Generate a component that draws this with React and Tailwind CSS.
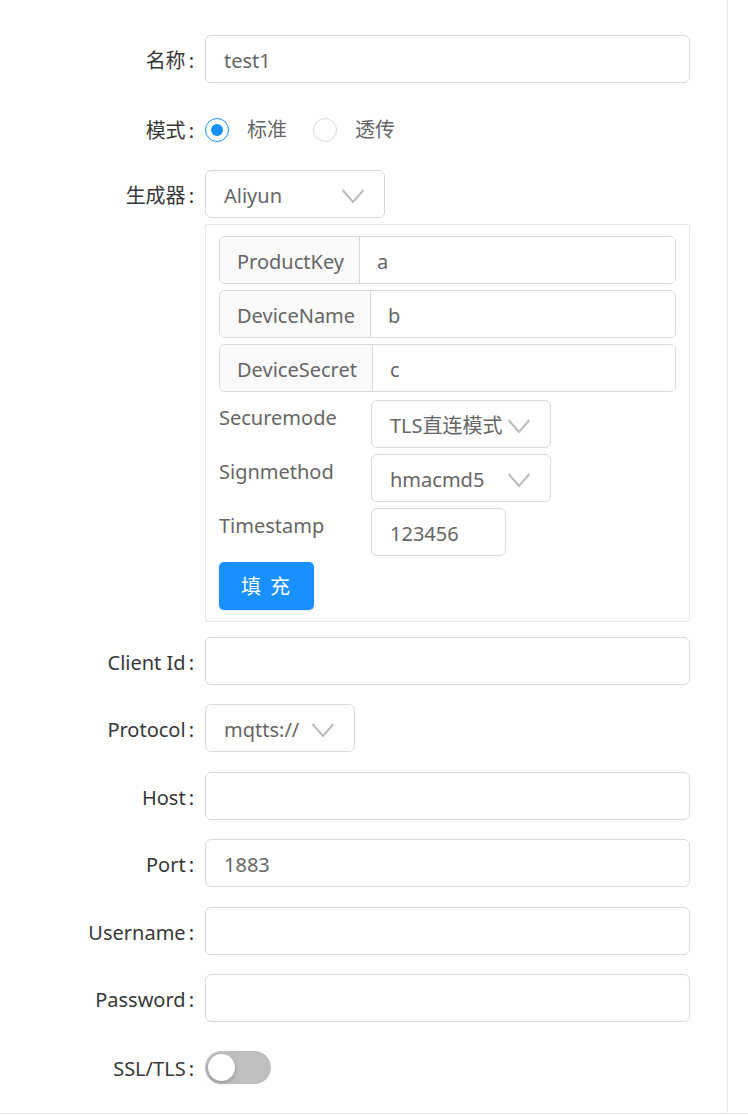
import React from "react";

const font = { fontFamily: '"Noto Sans", "Noto Sans CJK SC", sans-serif' };

function Chevron() {
    return (
        <svg width="24" height="16" viewBox="0 0 24 16" className="absolute right-[19px] top-[17px]" fill="none">
            <path d="M1.5 2 L12 14 L22.5 2" stroke="#bcbcbc" strokeWidth="2" />
        </svg>
    );
}

function Row({ label, children, className = "" }) {
    return (
        <div className={`flex ${className}`}>
            <div className="w-[205px] shrink-0 pr-[11px] pt-[4px] h-[48px] flex items-center justify-end text-[#383838]">
                {label}<span className="ml-[3px]">:</span>
            </div>
            <div className="flex-1 min-w-0">{children}</div>
        </div>
    );
}

function Input({ value = "", className = "w-[485px]" }) {
    return (
        <div className={`h-[48px] border border-[#d9d9d9] rounded-[6px] bg-white flex items-center pl-[18px] pt-[4px] text-[#666] ${className}`}>
            {value}
        </div>
    );
}

function Select({ value, className }) {
    return (
        <div className={`relative h-[48px] border border-[#d9d9d9] rounded-[6px] bg-white flex items-center pl-[18px] pt-[4px] text-[#666] whitespace-nowrap overflow-hidden ${className}`}>
            {value}
            <Chevron />
        </div>
    );
}

function Addon({ label, value, addonWidth }) {
    return (
        <div className="flex h-[48px] border border-[#d9d9d9] rounded-[6px] overflow-hidden">
            <div className={`${addonWidth} shrink-0 bg-[#fafafa] border-r border-[#d9d9d9] flex items-center pl-[17px] pt-[4px] text-[#666]`}>
                {label}
            </div>
            <div className="flex-1 flex items-center pl-[17px] pt-[4px] bg-white text-[#666]">{value}</div>
        </div>
    );
}

function Radio({ checked, label }) {
    return (
        <div className="flex items-center">
            <span className={`w-[24px] h-[24px] rounded-full border flex items-center justify-center bg-white ${checked ? "border-[#1890ff]" : "border-[#d9d9d9]"}`}>
                {checked && <span className="w-[12px] h-[12px] rounded-full bg-[#1890ff]" />}
            </span>
            <span className="ml-[18px] text-[#666]">{label}</span>
        </div>
    );
}

export default function App() {
    return (
        <div className="w-full border-b border-[#e8e8e8] bg-white text-[20px]" style={font}>
            <div className="w-[728px] h-[1113px] border-r border-[#e8e8e8] pt-[35px]">
                {/* 名称 */}
                <Row label="名称">
                    <Input value="test1" />
                </Row>

                {/* 模式 */}
                <Row label="模式" className="mt-[22px]">
                    <div className="h-[48px] pt-[2px] flex items-center gap-[26px]">
                        <Radio checked label="标准" />
                        <Radio label="透传" />
                    </div>
                </Row>

                {/* 生成器 */}
                <Row label="生成器" className="mt-[17px]">
                    <Select value="Aliyun" className="w-[180px]" />
                    <div className="mt-[6px] w-[485px] border border-[#e8e8e8] rounded-[2px] px-[13px] pt-[11px] pb-[11px] flex flex-col gap-[6px]">
                        <Addon label="ProductKey" value="a" addonWidth="w-[140px]" />
                        <Addon label="DeviceName" value="b" addonWidth="w-[151px]" />
                        <Addon label="DeviceSecret" value="c" addonWidth="w-[153px]" />
                        <div className="flex mt-[2px]">
                            <div className="w-[152px] shrink-0 text-[#666] leading-[32px] pt-[2px]">Securemode</div>
                            <Select value="TLS直连模式" className="w-[180px]" />
                        </div>
                        <div className="flex">
                            <div className="w-[152px] shrink-0 text-[#666] leading-[32px] pt-[2px]">Signmethod</div>
                            <Select value="hmacmd5" className="w-[180px]" />
                        </div>
                        <div className="flex">
                            <div className="w-[152px] shrink-0 text-[#666] leading-[32px] pt-[2px]">Timestamp</div>
                            <Input value="123456" className="w-[135px]" />
                        </div>
                        <div>
                            <button className="w-[95px] h-[48px] pt-[2px] rounded-[5px] bg-[#1890ff] text-white tracking-[2px] shadow-sm">
                                填 充
                            </button>
                        </div>
                    </div>
                </Row>

                <Row label="Client Id" className="mt-[15px]">
                    <Input />
                </Row>
                <Row label="Protocol" className="mt-[19px]">
                    <Select value="mqtts://" className="w-[150px]" />
                </Row>
                <Row label="Host" className="mt-[20px]">
                    <Input />
                </Row>
                <Row label="Port" className="mt-[19px]">
                    <Input value="1883" />
                </Row>
                <Row label="Username" className="mt-[20px]">
                    <Input />
                </Row>
                <Row label="Password" className="mt-[19px]">
                    <Input />
                </Row>

                {/* SSL/TLS */}
                <Row label="SSL/TLS" className="mt-[21px]">
                    <div className="h-[48px] flex items-center">
                        <div className="w-[66px] h-[33px] rounded-full bg-[#bfbfbf] p-[3px]">
                            <div className="w-[27px] h-[27px] rounded-full bg-white shadow-[0_2px_4px_rgba(0,35,11,0.25)]" />
                        </div>
                    </div>
                </Row>
            </div>
        </div>
    );
}
